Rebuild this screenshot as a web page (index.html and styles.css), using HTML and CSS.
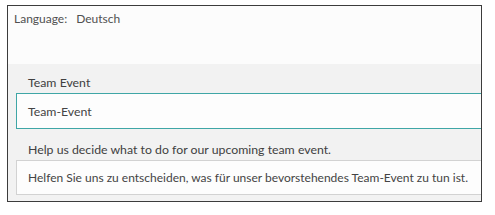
FILE: index.html
```html
<!DOCTYPE html>
<html lang="en">
<head>
<meta charset="utf-8">
<title>Team Event</title>
<link rel="stylesheet" href="styles.css">
</head>
<body>
<div class="frame">
  <div class="header">
    <span class="lang-label">Language:</span><span class="lang-value">Deutsch</span>
  </div>
  <div class="section">
    <div class="label">Team Event</div>
    <div class="field field-active">Team-Event</div>
    <div class="label label-second">Help us decide what to do for our upcoming team event.</div>
    <div class="field">Helfen Sie uns zu entscheiden, was für unser bevorstehendes Team-Event zu tun ist.</div>
  </div>
</div>
</body>
</html>
```

FILE: styles.css
```css
html, body {
  margin: 0;
  padding: 0;
  background: #ffffff;
}
body {
  font-family: Lato, "Noto Sans", sans-serif;
  font-size: 12.3px;
  color: #444444;
}
.frame {
  margin: 5px 0 0 7px;
  width: 473px;
  height: 195px;
  border: 1px solid #3c3c3c;
  overflow: hidden;
  display: flex;
  flex-direction: column;
}
.header {
  height: 58px;
  box-sizing: border-box;
  background: #fcfcfc;
  padding: 5px 0 0 6px;
  line-height: 16px;
  font-size: 12px;
  color: #505050;
}
.lang-value {
  margin-left: 9px;
}
.section {
  flex: 1;
  background: #f2f2f2;
  padding: 11px 0 0 8px;
}
.label {
  padding-left: 12px;
  line-height: 16px;
  height: 18px;
  color: #404040;
}
.label-second {
  margin-top: 13px;
}
.field {
  box-sizing: border-box;
  height: 35px;
  margin-right: -4px;
  border: 1px solid #d2d2d2;
  background: #fdfdfd;
  padding: 0 0 0 11px;
  display: flex;
  align-items: center;
  white-space: nowrap;
  font-size: 12px;
  color: #444444;
}
.field-active {
  height: 36px;
  border-color: #3fa6a6;
  font-size: 12.3px;
}
```
